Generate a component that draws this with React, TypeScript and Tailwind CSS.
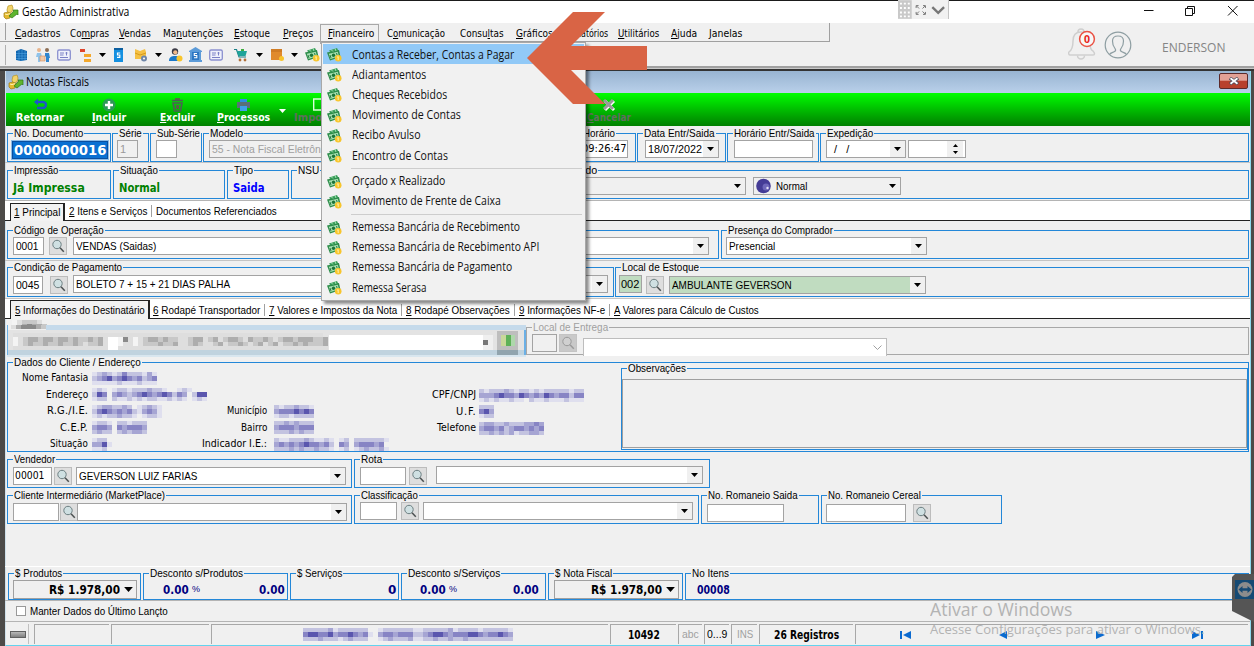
import { useLayoutEffect, useRef } from 'react';
import type { ReactNode } from 'react';
import clsx from 'clsx';

interface FitProps {
  w: number;
  className?: string;
  children: ReactNode;
}

// Condenses (or spreads) a label so that it takes exactly `w` pixels
function Fit({ w, className, children }: FitProps) {
  const ref = useRef<HTMLSpanElement>(null);
  useLayoutEffect(() => {
    const el = ref.current;
    if (!el) return;
    el.style.letterSpacing = '0px';
    const natural = el.offsetWidth;
    if (natural > w) {
      el.style.transform = `scaleX(${w / natural})`;
    } else {
      el.style.letterSpacing = `${(w - natural) / (el.textContent?.length || 1)}px`;
    }
  }, [w]);
  return (
    <span className={clsx('inline-block shrink-0', className)} style={{ width: w }}>
      <span ref={ref} className="inline-block origin-left whitespace-pre">
        {children}
      </span>
    </span>
  );
}

// "&" marks the accelerator key, as in the menu resources
function Accel({ text }: { text: string }) {
  const i = text.indexOf('&');
  if (i < 0) return <>{text}</>;
  return (
    <>
      {text.slice(0, i)}
      <u className="underline-offset-1">{text[i + 1]}</u>
      {text.slice(i + 2)}
    </>
  );
}

interface GroupProps {
  label: string;
  lw: number;
  className?: string;
  disabled?: boolean;
  children?: ReactNode;
}

function Group({ label, lw, className, disabled, children }: GroupProps) {
  return (
    <fieldset
      className={clsx(
        'min-w-0 shrink-0 border',
        disabled ? 'border-[#a8a8a8] text-[#a0a0a0]' : 'border-[#2387d8]',
        className,
      )}
    >
      <legend className="mb-[2px] ml-[5px] h-[10px] px-px text-[11px] leading-[10px]">
        <Fit w={lw}>{label}</Fit>
      </legend>
      <div className="flex items-start">{children}</div>
    </fieldset>
  );
}

function Caret({ className }: { className?: string }) {
  return (
    <svg className={clsx('shrink-0', className)} width="7" height="4" viewBox="0 0 7 4">
      <path d="M0 0h7L3.5 4z" fill="#000" />
    </svg>
  );
}

function Field({ className, children }: { className?: string; children?: ReactNode }) {
  return (
    <div
      className={clsx(
        'flex h-[18px] shrink-0 items-center overflow-hidden border border-[#a3a3a3] px-[2px] text-[11px] leading-[14px]',
        className,
      )}
    >
      {children}
    </div>
  );
}

function Combo({ className, children }: { className?: string; children?: ReactNode }) {
  return (
    <div
      className={clsx(
        'flex h-[18px] shrink-0 items-center justify-between border border-[#a3a3a3] pl-[2px] text-[11px] leading-[14px]',
        className,
      )}
    >
      <span className="flex items-center">{children}</span>
      <span className="flex h-4 w-[15px] items-center justify-center bg-[#f0f0f0]">
        <Caret />
      </span>
    </div>
  );
}

function LookupButton({ className, dim }: { className?: string; dim?: boolean }) {
  return (
    <div
      className={clsx(
        'flex h-[18px] w-[18px] shrink-0 items-center justify-center border',
        dim ? 'border-[#c4c4c4] bg-[#c9c9c9]' : 'border-[#bcbcbc] bg-[#dedede]',
        className,
      )}
    >
      <svg width="14" height="14" viewBox="0 0 14 14" fill="none">
        <circle cx="6" cy="5.5" r="4.2" fill={dim ? '#d0d0d0' : '#cfe0e2'} stroke={dim ? '#9a9a9a' : '#6d7f82'} />
        <path d="M9 8.8l3.8 4" stroke={dim ? '#9a9a9a' : '#4a4f50'} strokeWidth="1.5" />
      </svg>
    </div>
  );
}

const shades: Record<string, string> = {
  '0': 'bg-transparent',
  '1': 'bg-[#dfdfee]',
  '2': 'bg-[#c3c3e0]',
  '3': 'bg-[#a6a5d3]',
  '4': 'bg-[#8784c4]',
  '5': 'bg-[#5a56ae]',
  a: 'bg-[#f4f4f4]',
  b: 'bg-[#dedede]',
  c: 'bg-[#c8c8c8]',
  d: 'bg-[#adadad]',
  e: 'bg-[#8a8a8a]',
  w: 'bg-white',
};

// Pixelated censor bar, one character for each 5px block
function Mosaic({ rows, className }: { rows: string[]; className?: string }) {
  return (
    <div className={clsx('shrink-0', className)}>
      {rows.map((row, y) => (
        <div key={y} className={clsx('flex', y === 1 ? 'h-[5px]' : 'h-[4px]')}>
          {row.split('').map((c, x) => (
            <span key={x} className={clsx('h-full w-[5px]', shades[c])} />
          ))}
        </div>
      ))}
    </div>
  );
}

function AppIcon() {
  return (
    <svg className="shrink-0" width="16" height="16" viewBox="0 0 16 16">
      <path d="M5 2l4-1 1 3-1 4-4 1-1-3z" fill="#f2d46a" stroke="#b99524" strokeWidth=".7" />
      <path d="M1 9l4-1 3 2-1 4-4 1-2-2z" fill="#e4b92e" stroke="#a07c14" strokeWidth=".7" />
      <path d="M6 12l5-5-1-1 5 0v5l-1-1-5 4z" fill="#5fb52e" stroke="#2f7a12" strokeWidth=".7" />
      <path d="M2 10l2 .6 3-1" stroke="#fff3b0" fill="none" />
    </svg>
  );
}

function MoneyIcon() {
  return (
    <svg className="shrink-0" width="15" height="15" viewBox="0 0 15 15">
      <path d="M2 3.500l8-2.500 1.500 3L4 6z" fill="#3aa05a" />
      <path d="M0 5.500l12-2.500 1.500 7L3 13.500z" fill="#2c8c4a" />
      <path d="M1.800 6.800l9-2 1.200 4.400-8.500 2.800z" fill="#a5dfb0" />
      <path d="M4 2.500l2 2M8 1.500l1 2.500" stroke="#bfeccb" strokeWidth=".8" />
      <circle cx="6.500" cy="8.300" r="1.700" fill="#1c7438" />
      <path d="M3 8l1 3M9.500 6l.6 2" stroke="#1c7438" strokeWidth=".9" />
      <circle cx="11.200" cy="11.300" r="3.300" fill="#f8c52c" />
      <path d="M11.200 9.500v3.600M10.200 10h1" stroke="#fff2ac" strokeWidth="1" />
    </svg>
  );
}

function GlobeIcon() {
  return (
    <svg width="14" height="14" viewBox="0 0 14 14">
      <path d="M1 3l5-2 6 2v9l-6 1-5-1z" fill="#1267b0" />
      <path d="M1 5.5h11M1 8h11M1 10.5h11M4 2v11M7 2v11M10 3v9" stroke="#4fa3e3" strokeWidth=".6" />
    </svg>
  );
}

function PeopleIcon() {
  return (
    <svg width="16" height="16" viewBox="0 0 16 16" fill="none">
      <circle cx="4" cy="3" r="2" fill="#e8b48c" />
      <circle cx="12" cy="3" r="2" fill="#8d6e55" />
      <path d="M2 6h4l1 4H5v5H3v-5H1z" fill="#8fc3ea" />
      <path d="M10 6h4l1 5h-1v4h-3v-5l-1-1z" fill="#2f86cf" />
      <path d="M5 9h5v5H5z" fill="#f0c9a8" stroke="#d08a5c" strokeWidth=".6" />
    </svg>
  );
}

function CardIcon() {
  return (
    <svg width="14" height="12" viewBox="0 0 14 12" fill="none">
      <rect x=".7" y="1" width="12.6" height="10" rx="1.4" fill="#eef0fb" stroke="#8a90cf" strokeWidth="1.3" />
      <path d="M3 4h4M3 6h3.5M3 8.5h8M9.5 3v3.5M8.5 4h2" stroke="#7a80c6" />
    </svg>
  );
}

function TreeIcon() {
  return (
    <svg width="13" height="14" viewBox="0 0 13 14">
      <path d="M1 1h5v3H1z" fill="#e0452c" />
      <path d="M5 6h7v3H5z" fill="#f3a82c" />
      <path d="M5 11h7v3H5z" fill="#f3a82c" />
    </svg>
  );
}

function BookIcon() {
  return (
    <svg width="9" height="14" viewBox="0 0 9 14">
      <path d="M0 0h9v14H0z" fill="#1590e0" />
      <path d="M0 0h9v2H0z" fill="#0c5fa0" />
      <path d="M6.200 5H3.500v2h2.300v2.300H3" stroke="#fff" fill="none" strokeWidth="1.200" />
    </svg>
  );
}

function BoxGearIcon() {
  return (
    <svg width="14" height="14" viewBox="0 0 14 14">
      <path d="M1 1l5 2 5-2 1 3v7H1z" fill="#f5c144" />
      <path d="M1 5l5 2 6-2" stroke="#d59a1c" fill="none" />
      <circle cx="10" cy="10.500" r="3" fill="#6f86a8" />
      <circle cx="10" cy="10.500" r="1.100" fill="#f5f5f5" />
    </svg>
  );
}

function PersonIcon() {
  return (
    <svg width="14" height="14" viewBox="0 0 14 14">
      <circle cx="6" cy="3.500" r="3.200" fill="#3b3b46" />
      <circle cx="6.300" cy="4.300" r="2.100" fill="#f0b98a" />
      <path d="M0 13c0-4 2.500-5 6-5s5 1 5 5z" fill="#1a78c8" />
      <circle cx="10.500" cy="10.500" r="3" fill="#f8c52c" />
    </svg>
  );
}

function BankIcon() {
  return (
    <svg width="13" height="15" viewBox="0 0 13 15">
      <path d="M0 4l6.500-4L13 4v1H0zM0 13h13v2H0zM1 5h2v8H1zM10 5h2v8h-2z" fill="#5c9bd8" />
      <path d="M3 5h7v8H3z" fill="#2e78c4" />
      <path d="M8 6.500H5.300v2h2.500v2.200H5" stroke="#fff" fill="none" strokeWidth="1.100" />
    </svg>
  );
}

function CartIcon() {
  return (
    <svg width="14" height="14" viewBox="0 0 14 14">
      <path d="M0 1.500h2.500L5 9h7" stroke="#1a7f86" fill="none" strokeWidth="1.200" />
      <path d="M3 3h10l-1.500 5H4.500z" fill="#1fa39a" />
      <path d="M7 1h3v2H7z" fill="#3fae3f" />
      <circle cx="6" cy="12" r="1.400" fill="#b0703a" />
      <circle cx="11" cy="12" r="1.400" fill="#b0703a" />
    </svg>
  );
}

function PackageIcon() {
  return (
    <svg width="13" height="13" viewBox="0 0 13 13">
      <path d="M0 1h11v11H0z" fill="#e08a2c" />
      <path d="M0 1h11v3H0z" fill="#d07c24" />
      <circle cx="10.500" cy="10.500" r="2.500" fill="#f8c52c" />
    </svg>
  );
}

function TitleBar() {
  return (
    <div className="relative flex h-[23px] shrink-0 items-center border-t border-[#1b1b1b] bg-white pl-[3px]">
      <AppIcon />
      <Fit w={107} className="ml-[3px] text-[12px] font-['Open_Sans',sans-serif]">Gestão Administrativa</Fit>
      <div className="flex-1" />
      <svg className="mr-[16px] -mt-[3px]" width="94" height="12" viewBox="0 0 94 12" fill="none" stroke="#111">
        <path d="M0 5.500h9.500M41.500 3.500h7v7h-7zM43.500 3.500v-2h7v7h-2M84 1l9.500 9.500M93.500 1L84 10.500" />
      </svg>
      {/* Remote session handle */}
      <div className="absolute top-[-1px] left-[898px] flex h-[19px] w-[51px] items-center border-r border-[#c4c4c4] bg-[#f1f1f1]">
        <svg width="51" height="19" viewBox="0 0 51 19" fill="none">
          <path d="M0 0h14v19H0z" fill="#c9c9c9" />
          <path d="M2 3.500h12M2 8h12M2 12.500h12M2 16.500h12" stroke="#fff" strokeWidth="2" strokeDasharray="2 2" />
          <path d="M18.500 8V5.500H21M25.500 5.500H28V8M28 12v2.500h-2.500M21 14.500h-2.500V12M19 6l2.500 2.500M27.500 6L25 8.500M27.500 14L25 11.500M19 14l2.500-2.500" stroke="#777" />
          <path d="M35 7l6 6 6-6" stroke="#777" strokeWidth="2.400" />
        </svg>
      </div>
    </div>
  );
}

// text, width of the label, distance to the next label
const menus: [string, number, number][] = [
  ['&Cadastros', 45, 10],
  ['Co&mpras', 39, 10],
  ['&Vendas', 32, 12],
  ['Ma&nutenções', 60, 11],
  ['&Estoque', 36, 13],
  ['&Preços', 30, 15],
];

const menusRight: [string, number, number][] = [
  ['C&omunicação', 58, 15],
  ['Consu&ltas', 44, 12],
  ['&Gráficos', 37, 16],
  ['&Relatórios', 39, 10],
  ['&Utilitários', 41, 12],
  ['&Ajuda', 26, 12],
  ['&Janelas', 33, 0],
];

function Gap({ px }: { px: number }) {
  return <span className="shrink-0" style={{ width: px }} />;
}

function MenuBar() {
  return (
    <div className="flex h-[19px] w-[830px] shrink-0 border-r border-b border-[#a0a0a0] pl-[5px] text-[11px] font-['DejaVu_Sans_Condensed','DejaVu_Sans',sans-serif]">
      <div className="mr-[9px] h-[17px] border-r border-[#a0a0a0]" />
      <div className="flex h-[22px] items-center">
        {menus.map(([text, w, gap]) => (
          <span key={text} className="flex">
            <Fit w={w}><Accel text={text} /></Fit>
            <Gap px={gap} />
          </span>
        ))}
      </div>
      <div className="-ml-[8px] mt-[1px] mr-[8px] flex h-[20px] w-[59px] items-center border-t border-r border-l border-[#a8a8a8] pl-[7px]">
        <Fit w={46}><Accel text="&Financeiro" /></Fit>
      </div>
      <div className="flex h-[22px] items-center">
        {menusRight.map(([text, w, gap]) => (
          <span key={text} className="flex">
            <Fit w={w}><Accel text={text} /></Fit>
            <Gap px={gap} />
          </span>
        ))}
      </div>
    </div>
  );
}

function ToolBar() {
  return (
    <div className="flex h-[24px] shrink-0 items-center pt-px pl-[5px]">
      <div className="h-[20px] w-px bg-[#b0b0b0]" />
      <div className="ml-[5px] flex items-center">
        <span className="flex w-[21px] justify-center"><GlobeIcon /></span>
        <span className="flex w-[21px] justify-center"><PeopleIcon /></span>
        <span className="flex w-[21px] justify-center"><CardIcon /></span>
        <span className="flex w-[23px] justify-center"><TreeIcon /></span>
        <Caret className="mx-[2px]" />
        <span className="flex w-[21px] justify-center"><BookIcon /></span>
        <span className="flex w-[24px] justify-center"><BoxGearIcon /></span>
        <Caret className="mx-[2px]" />
        <span className="flex w-[23px] justify-center"><PersonIcon /></span>
        <span className="flex w-[17px] justify-center"><BankIcon /></span>
        <span className="flex w-[24px] justify-center"><CardIcon /></span>
        <span className="flex w-[26px] justify-center"><CartIcon /></span>
        <Caret className="mx-[2px]" />
        <span className="flex w-[24px] justify-center"><PackageIcon /></span>
        <Caret className="mx-[2px]" />
        <span className="flex w-[25px] justify-center"><MoneyIcon /></span>
      </div>
    </div>
  );
}

function UserPanel() {
  return (
    <div className="mt-[6px] mr-[29px] flex items-center">
      <svg width="70" height="40" viewBox="0 0 70 40" fill="none">
        <path d="M13 4c-6 0-8 4-8 9 0 6-1 9-4 11-1 1 0 3 1 3h23c2 0 2-2 0-4-2-1-3-4-3-8 0-7-3-11-9-11z" stroke="#cfcfcf" strokeWidth="1.500" />
        <path d="M10 4a3 3 0 016 0M9.500 27.500a3.500 3.500 0 007 0" stroke="#cfcfcf" strokeWidth="1.500" />
        <circle cx="19" cy="11" r="7.400" fill="#f7f7f7" stroke="#ea5345" strokeWidth="1.500" />
        <text x="19" y="15" textAnchor="middle" fontSize="10.500" fontWeight="700" fill="#e8261c" className="font-['Open_Sans',sans-serif]">0</text>
        <circle cx="50" cy="17" r="12.800" stroke="#8e9ea2" strokeWidth="1.200" />
        <path d="M41.500 26.500c1-2 4-2 5.500-3.200 1-.8.700-2-.3-3.300-1.600-2-2.200-4-2.200-7 0-3.500 2.500-5 5.500-5s5.500 1.500 5.500 5c0 3-.6 5-2.200 7-1 1.300-1.300 2.500-.3 3.300 1.500 1.200 4.500 1.200 5.500 3.200" stroke="#8e9ea2" strokeWidth="1.200" />
      </svg>
      <Fit w={63} className="ml-[24px] text-[12px] text-[#858585] font-['Open_Sans',sans-serif]">ENDERSON</Fit>
    </div>
  );
}

function ActionBar() {
  return (
    <div className="flex h-[33px] shrink-0 bg-linear-to-b from-[#00ff00] to-[#008000] pl-[10px] text-[11px] leading-[12px] font-bold text-white font-['DejaVu_Sans',sans-serif]">
      <div className="mr-[28px] flex flex-col items-center pt-[5px]">
        <svg width="13" height="14" viewBox="0 0 13 14" fill="none">
          <path d="M3 4h6a3 3 0 010 6H3" stroke="#1d55c8" strokeWidth="2.400" />
          <path d="M0 4l4-3.500v7z" fill="#1d55c8" />
        </svg>
        <Fit w={48}>Retornar</Fit>
      </div>
      <div className="mr-[34px] flex flex-col items-center pt-[5px]">
        <svg width="14" height="14" viewBox="0 0 14 14">
          <circle cx="7" cy="7" r="6.500" fill="#2c9a55" />
          <path d="M7 3v8M3 7h8" stroke="#fff" strokeWidth="2.400" />
        </svg>
        <Fit w={34}><Accel text="&Incluir" /></Fit>
      </div>
      <div className="mr-[22px] flex flex-col items-center pt-[5px]">
        <svg width="13" height="14" viewBox="0 0 13 14" fill="none">
          <path d="M1 2.500h11M2 5l1.500 8h6L11 5z" stroke="#4b6152" strokeWidth="1.600" />
          <path d="M4 1h5M5 7l3 4M8 7l-3 4" stroke="#6b4a55" strokeWidth="1.300" />
        </svg>
        <Fit w={35}><Accel text="&Excluir" /></Fit>
      </div>
      <div className="mr-[9px] flex flex-col items-center pt-[5px]">
        <svg width="13" height="14" viewBox="0 0 13 14">
          <path d="M3 1h7v4H3z" fill="#2f8fe0" />
          <path d="M0 4h13v6H0z" fill="#5a7078" />
          <path d="M3 8h7v5H3z" fill="#3fa0ea" />
        </svg>
        <Fit w={53}><Accel text="&Processos" /></Fit>
      </div>
      <svg className="mt-[16px] mr-[8px]" width="7" height="4" viewBox="0 0 7 4">
        <path d="M0 0h7L3.500 4z" fill="#fff" />
      </svg>
      <div className="mr-[243px] flex w-[50px] flex-col items-center pt-[5px] text-[#5f6f5f]">
        <svg width="13" height="14" viewBox="0 0 13 14" fill="none">
          <path d="M.7 1v11h11V4l-3-3z" stroke="#d8ffd8" strokeWidth="1.400" />
        </svg>
        <Fit w={50}>Importar</Fit>
      </div>
      <div className="flex flex-col items-center pt-[5px] text-[#5f6f5f]">
        <svg width="14" height="14" viewBox="0 0 14 14">
          <path d="M3 3l9 9M12 3l-9 9" stroke="#fff" strokeWidth="3" />
          <path d="M2 2l9 9M11 2l-9 9" stroke="#9a9a9a" strokeWidth="3" />
        </svg>
        <Fit w={44}><Accel text="&Cancelar" /></Fit>
      </div>
    </div>
  );
}

function HeaderRows() {
  return (
    <>
      <div className="flex h-[37px] shrink-0 gap-px border-b border-[#c4c4c4] pt-[2px] pl-[2px]">
        <Group label="No. Documento" lw={69} className="h-[34px] w-[104px]">
          <div className="ml-[3px] flex h-[20px] w-[98px] items-center border border-[#8dbbe6] bg-white p-px">
            <div className="flex h-full w-full items-center bg-[#0a70d2] pl-px text-white outline outline-[#0a4fa0]">
              <Fit w={92} className="text-[14px] leading-[16px] font-bold font-['DejaVu_Sans',sans-serif]">0000000016</Fit>
            </div>
          </div>
        </Group>
        <Group label="Série" lw={23} className="h-[34px] w-[37px]">
          <Field className="ml-[4px] w-[21px] text-[#9a9a9a]">1</Field>
        </Group>
        <Group label="Sub-Série" lw={43} className="h-[34px] w-[52px]">
          <Field className="ml-[5px] w-[21px] bg-white" />
        </Group>
        <Group label="Modelo" lw={33} className="h-[34px] w-[372px]">
          <Field className="ml-[5px] w-[150px] text-[#a0a0a0]">
            <Fit w={122}>55 - Nota Fiscal Eletrônica</Fit>
          </Field>
        </Group>
        <Group label="Horário" lw={32} className="h-[34px] w-[60px]">
          <Field className="ml-[2px] w-[49px] bg-white px-0 text-[11px] font-['DejaVu_Sans_Condensed','DejaVu_Sans',sans-serif]">
            <Fit w={44}>09:26:47</Fit>
          </Field>
        </Group>
        <Group label="Data Entr/Saida" lw={71} className="h-[34px] w-[89px]">
          <Combo className="ml-[7px] w-[74px] bg-white">
            <Fit w={54}>18/07/2022</Fit>
          </Combo>
        </Group>
        <Group label="Horário Entr/Saida" lw={81} className="h-[34px] w-[92px]">
          <Field className="ml-[6px] w-[79px] bg-white" />
        </Group>
        <Group label="Expedição" lw={46} className="h-[34px] w-[429px]">
          <Combo className="ml-[5px] w-[80px] bg-white">
            <Fit w={16} className="ml-[5px]">/  /</Fit>
          </Combo>
          <Field className="ml-[2px] w-[58px] justify-end bg-white px-0">
            <span className="flex h-4 w-[16px] flex-col items-center justify-center gap-[4px] bg-[#f0f0f0]">
              <svg width="5" height="3" viewBox="0 0 5 3"><path d="M0 3h5L2.500 0z" /></svg>
              <svg width="5" height="3" viewBox="0 0 5 3"><path d="M0 0h5L2.500 3z" /></svg>
            </span>
          </Field>
        </Group>
      </div>

      <div className="flex h-[37px] shrink-0 gap-px pt-[2px] pl-[2px]">
        <Group label="Impressão" lw={44} className="h-[34px] w-[104px]">
          <Fit w={72} className="mt-[3px] ml-[5px] text-[12px] leading-[16px] font-bold text-[#008000] font-['DejaVu_Sans',sans-serif]">Já Impressa</Fit>
        </Group>
        <Group label="Situação" lw={38} className="ml-px h-[34px] w-[112px]">
          <Fit w={41} className="mt-[3px] ml-[5px] text-[12px] leading-[16px] font-bold text-[#008000] font-['DejaVu_Sans',sans-serif]">Normal</Fit>
        </Group>
        <Group label="Tipo" lw={19} className="ml-px h-[34px] w-[62px]">
          <Fit w={32} className="mt-[3px] ml-[5px] text-[12px] leading-[16px] font-bold text-[#0000ff] font-['DejaVu_Sans',sans-serif]">Saida</Fit>
        </Group>
        <Group label="NSU" lw={21} className="ml-px h-[34px] w-[247px]" />
        <Group label="Conciliado" lw={50} className="ml-px h-[34px] w-[709px]">
          <Combo className="ml-[5px] w-[200px]" />
          <Combo className="ml-[7px] w-[148px]">
            <svg width="16" height="16" viewBox="0 0 16 16">
              <circle cx="7.500" cy="8" r="7.300" fill="#453c96" />
              <circle cx="10" cy="9" r="3.500" fill="#6f68ba" />
              <circle cx="11.500" cy="10" r="1.200" fill="#e2e0f5" />
            </svg>
            <Fit w={31} className="ml-[4px]">Normal</Fit>
          </Combo>
        </Group>
      </div>
    </>
  );
}

function MainTabs() {
  return (
    <div className="flex h-[21px] shrink-0 items-stretch border-t border-b border-t-[#b4b4b4] border-b-[#222] bg-white text-[11px]">
      <div className="-mb-px ml-[5px] mt-[2px] flex w-[55px] items-center border-t border-r-2 border-l border-[#222] bg-[#f2f2f2] pl-[3px]">
        <Fit w={46}><Accel text="&1 Principal" /></Fit>
      </div>
      <div className="flex items-center pt-px pl-[4px]">
        <Fit w={78}><Accel text="&2 Itens e Serviços" /></Fit>
        <span className="mx-[4px] h-[12px] w-px bg-[#a0a0a0]" />
        <Fit w={121}>Documentos Referenciados</Fit>
      </div>
    </div>
  );
}

function OperationRows() {
  return (
    <>
      <div className="flex h-[40px] shrink-0 gap-px border-b border-[#c4c4c4] pt-[4px] pl-[2px]">
        <Group label="Código de Operação" lw={90} className="h-[34px] w-[712px]">
          <Field className="ml-[5px] w-[31px] bg-white"><Fit w={22}>0001</Fit></Field>
          <LookupButton className="ml-[5px]" />
          <Combo className="ml-[6px] w-[636px] bg-white"><Fit w={80}>VENDAS (Saidas)</Fit></Combo>
        </Group>
        <Group label="Presença do Comprador" lw={105} className="ml-px h-[34px] w-[528px]">
          <Combo className="ml-[4px] w-[201px] bg-white"><Fit w={46}>Presencial</Fit></Combo>
        </Group>
      </div>
      <div className="flex h-[38px] shrink-0 gap-px border-b border-[#c4c4c4] pt-px pl-[2px]">
        <Group label="Condição de Pagamento" lw={108} className="h-[35px] w-[607px]">
          <Field className="mt-[2px] ml-[5px] w-[30px] bg-white"><Fit w={23}>0045</Fit></Field>
          <LookupButton className="mt-[2px] ml-[7px]" />
          <Combo className="mt-px ml-[5px] w-[535px] bg-white"><Fit w={154}>BOLETO 7 + 15 + 21 DIAS PALHA</Fit></Combo>
        </Group>
        <Group label="Local de Estoque" lw={77} className="h-[35px] w-[634px]">
          <Field className="mt-px ml-[3px] w-[23px] bg-[#c0dcc0] px-px"><Fit w={18}>002</Fit></Field>
          <LookupButton className="mt-[2px] ml-[4px]" />
          <Combo className="mt-[2px] ml-[5px] w-[257px] bg-[#c0dcc0]"><Fit w={120}>AMBULANTE GEVERSON</Fit></Combo>
        </Group>
      </div>
    </>
  );
}

const detailTabs: [string, number][] = [
  ['&6 Rodapé Transportador', 107],
  ['&7 Valores e Impostos da Nota', 128],
  ['&8 Rodapé Observações', 104],
  ['&9 Informações NF-e', 86],
  ['&A Valores para Cálculo de Custos', 145],
];

function DetailTabs() {
  return (
    <div className="flex h-[20px] shrink-0 items-stretch border-b border-[#222] bg-white text-[11px]">
      <div className="-mb-px ml-[5px] mt-px flex w-[140px] items-center border-t border-r-2 border-l border-[#222] bg-[#f2f2f2] pl-[4px]">
        <Fit w={130}><Accel text="&5 Informações do Destinatário" /></Fit>
      </div>
      <div className="flex items-center pt-[3px] pl-[3px]">
        {detailTabs.map(([text, w], i) => (
          <span key={text} className="flex items-center">
            {i > 0 && <span className="mx-[4px] h-[12px] w-px bg-[#a0a0a0]" />}
            <Fit w={w}><Accel text={text} /></Fit>
          </span>
        ))}
      </div>
    </div>
  );
}

function ClientRow() {
  return (
    <div className="flex h-[38px] shrink-0 pl-[2px]">
      <div className="mt-px flex h-[37px] w-[519px] shrink-0 flex-col">
        <Mosaic rows={['0abcccb', '0abdeddc']} className="h-[5px] overflow-hidden" />
        <div className="flex h-[5px]">
          <span className="w-[4px] border-l border-[#6bb0e6]" />
          <Mosaic rows={['bdeeedc']} />
          <span className="h-[5px] flex-1 bg-[#c5daeb]" />
        </div>
        <div className="flex h-[20px] border-r-2 border-l border-[#6bb0e6] bg-[#e3e3e3] pl-[5px]">
          <Mosaic
            rows={['bbbbbbbbbbbbbbbbbbbbbbbbbbbbbbbbbbbbbbbbbbbbbbbbbbbbbbbbbbbbbb', 'abcddcddcddcdccdcdbwwaebabcddcdccbbcddbcdbcddcbdccdcbcddcdddccd', 'abcdccdccdccdcbccdbwwabbabcccdccdbbcdcbbcdbccdcbcdbcdbccdcdcccd', 'bbbbbbbbbbbbbbbbbbbwwbbbbbbbbbbbbbbbbbbbbbbbbbbbbbbbbbbbbbbbbbb']}
            className="mt-[3px] w-[316px]"
          />
          <div className="mt-[5px] h-[15px] w-[134px] bg-white" />
          <div className="mt-[5px] h-[15px] w-[20px] bg-white" />
          <div className="mt-[5px] flex h-[15px] w-[10px] items-center bg-[#efefef]"><span className="h-[5px] w-[5px] bg-[#777]" /></div>
          <div className="mt-px ml-[4px] flex h-[19px] w-[21px] bg-[#bebebe] pt-[4px] pl-[4px]">
            <span className="h-[11px] w-[5px] bg-[#c9d89a]" />
            <span className="h-[11px] w-[5px] bg-[#5eb158]" />
            <span className="h-[11px] w-[4px] bg-[#aed7ab]" />
          </div>
        </div>
        <div className="flex h-[5px] border-r-2 border-l border-[#6bb0e6] bg-[#c0d3df]"><span className="ml-[489px] h-full w-[21px] bg-[#91a4ae]" /></div>
        <div className="h-[2px] bg-[#d8e6ef]" />
      </div>
      <Group label="Local de Entrega" lw={75} disabled className="mt-[3px] h-[33px] w-[723px]">
        <Field className="ml-[5px] w-[25px]" />
        <LookupButton dim className="ml-[2px]" />
        <div className="mt-[4px] ml-[6px] flex h-[18px] w-[304px] items-center justify-end border-t border-r border-l border-[#bdbdbd] bg-white pr-[4px]">
          <svg width="9" height="5" viewBox="0 0 9 5" fill="none"><path d="M.5.5l4 4 4-4" stroke="#a0a0a0" /></svg>
        </div>
      </Group>
    </div>
  );
}

function InfoLine({ label, lw, box, rows }: { label: string; lw: number; box: string; rows: string[] }) {
  return (
    <div className="flex h-[16.5px] items-center">
      <div className={clsx('flex shrink-0 justify-end', box)}><Fit w={lw}>{label}</Fit></div>
      <Mosaic rows={rows} />
    </div>
  );
}

function ClientData() {
  return (
    <div className="shrink-0 pl-[2px]">
      <Group label="Dados do Cliente / Endereço" lw={127} className="h-[95px] w-[1242px]">
        <div className="mt-px flex h-[81px] w-[613px] shrink-0 text-[11px] font-['DejaVu_Sans_Condensed','DejaVu_Sans',sans-serif]">
          <div className="w-[190px] shrink-0">
            <InfoLine label="Nome Fantasia" lw={66} box="w-[80px] mr-[4px]" rows={['1232124222131', '2345345434234', '1111121112111']} />
            <InfoLine label="Endereço" lw={42} box="w-[80px] mr-[4px]" rows={['121012212223221001210000', '254034323454345424302550', '122021121212211212101210']} />
            <InfoLine label="R.G./I.E." lw={41} box="w-[80px] mr-[4px]" rows={['12332232012321', '24543434213431', '12122322101221']} />
            <InfoLine label="C.E.P." lw={28} box="w-[80px] mr-[4px]" rows={['12210221222', '34430434443', '23220232332']} />
            <InfoLine label="Situação" lw={38} box="w-[80px] mr-[4px]" rows={['1220', '3351', '1120']} />
          </div>
          <div className="mt-[33px] w-[190px] shrink-0">
            <InfoLine label="Município" lw={40} box="w-[69px] mr-[7px]" rows={['21223221', '34445454', '12212222']} />
            <InfoLine label="Bairro" lw={26} box="w-[69px] mr-[7px]" rows={['22323222', '34443444', '22232322']} />
            <InfoLine label="Indicador I.E.:" lw={65} box="w-[69px] mr-[7px]" rows={['21122232112101202222221', '34343454434204303444340', '22232322322101201232231']} />
          </div>
          <div className="mt-[17px] shrink-0">
            <InfoLine label="CPF/CNPJ" lw={44} box="w-[88px] mr-[3px]" rows={['2122232122121222221220', '3334544354343543442440', '1212112110211211121110']} />
            <InfoLine label="U.F." lw={20} box="w-[88px] mr-[3px]" rows={['222', '453', '122']} />
            <InfoLine label="Telefone" lw={39} box="w-[88px] mr-[3px]" rows={['2332232223343', '3443423443434', '2232323122332']} />
          </div>
        </div>
        <Group label="Observações" lw={58} className="-mt-[6px] h-[87px] w-[627px]">
          <div className="mt-[4px] h-[69px] w-[625px] border border-[#a0a0a0]" />
        </Group>
      </Group>
    </div>
  );
}

function SellerRows() {
  return (
    <>
      <div className="mt-[2px] flex shrink-0 gap-[3px] pl-[2px]">
        <Group label="Vendedor" lw={41} className="h-[34px] w-[345px]">
          <Field className="mt-px ml-[5px] w-[39px] bg-white px-px font-['DejaVu_Sans_Condensed','DejaVu_Sans',sans-serif]"><Fit w={29}>00001</Fit></Field>
          <LookupButton className="mt-px ml-[2px]" />
          <Combo className="mt-px ml-[4px] w-[270px] bg-white"><Fit w={118}>GEVERSON LUIZ FARIAS</Fit></Combo>
        </Group>
        <Group label="Rota" lw={21} className="-ml-px h-[34px] w-[356px]">
          <Field className="mt-px ml-[5px] w-[46px] bg-white" />
          <LookupButton className="mt-px ml-[3px]" />
          <Combo className="ml-[9px] w-[267px] bg-white" />
        </Group>
      </div>
      <div className="mt-[2px] flex shrink-0 gap-[2px] pl-[2px]">
        <Group label="Cliente Intermediário (MarketPlace)" lw={151} className="h-[34px] w-[345px]">
          <Field className="mt-px ml-[5px] w-[46px] bg-white" />
          <LookupButton className="mt-px ml-px" />
          <Combo className="mt-px -ml-px w-[270px] bg-white" />
        </Group>
        <Group label="Classificação" lw={57} className="h-[34px] w-[345px]">
          <Field className="ml-[5px] w-[37px] bg-white" />
          <LookupButton className="ml-[4px]" />
          <Combo className="ml-[4px] w-[270px] bg-white" />
        </Group>
        <Group label="No. Romaneio Saida" lw={90} className="h-[34px] w-[118px]">
          <Field className="mt-[2px] ml-[5px] w-[77px] bg-white" />
        </Group>
        <Group label="No. Romaneio Cereal" lw={93} className="h-[34px] w-[181px]">
          <Field className="mt-[2px] ml-[4px] w-[80px] bg-white" />
          <LookupButton className="mt-[2px] ml-[7px]" />
        </Group>
      </div>
    </>
  );
}

function Amount({ w, className, children }: FitProps) {
  return (
    <Fit w={w} className={clsx("text-[12px] leading-[14px] font-bold font-['DejaVu_Sans',sans-serif]", className)}>
      {children}
    </Fit>
  );
}

function Totals() {
  return (
    <div className="flex h-[35px] shrink-0 gap-[2px] border-t border-b border-t-white border-b-[#b4b4b4] pt-px pl-[3px]">
      <Group label="$ Produtos" lw={47} className="h-[32px] w-[133px]">
        <div className="ml-[4px] flex h-[19px] w-[124px] items-center justify-end border border-[#a0a0a0] pr-[3px]">
          <Amount w={71}>R$ 1.978,00</Amount>
          <Caret className="ml-[4px] h-[5px] w-[9px]" />
        </div>
      </Group>
      <Group label="Desconto s/Produtos" lw={93} className="h-[32px] w-[145px]">
        <div className="flex h-[19px] w-full items-center pr-[2px] pl-[19px] text-[#000080]">
          <Amount w={26}>0.00</Amount>
          <span className="mb-px ml-[3px] text-[9px] leading-[12px]">%</span>
          <span className="flex-1" />
          <Amount w={26}>0.00</Amount>
        </div>
      </Group>
      <Group label="$ Serviços" lw={45} className="h-[32px] w-[109px]">
        <div className="flex h-[19px] w-full items-center justify-end pr-[2px] text-[#000080]">
          <Amount w={8}>0</Amount>
        </div>
      </Group>
      <Group label="Desconto s/Serviços" lw={92} className="h-[32px] w-[145px]">
        <div className="flex h-[19px] w-full items-center pr-[6px] pl-[18px] text-[#000080]">
          <Amount w={26}>0.00</Amount>
          <span className="mb-px ml-[3px] text-[9px] leading-[12px]">%</span>
          <span className="flex-1" />
          <Amount w={26}>0.00</Amount>
        </div>
      </Group>
      <Group label="$ Nota Fiscal" lw={57} className="h-[32px] w-[135px]">
        <div className="ml-[5px] flex h-[19px] w-[125px] items-center justify-end border border-[#a0a0a0] pr-[3px]">
          <Amount w={71}>R$ 1.978,00</Amount>
          <Caret className="ml-[4px] h-[5px] w-[9px]" />
        </div>
      </Group>
      <Group label="No Itens" lw={37} className="h-[32px] w-[564px]">
        <div className="flex h-[19px] items-center pl-[11px] text-[#000080]">
          <Amount w={33}>00008</Amount>
        </div>
      </Group>
    </div>
  );
}

function Panel({ className, children }: { className?: string; children?: ReactNode }) {
  return (
    <div className={clsx('mr-[2px] flex h-[20px] shrink-0 items-center justify-center border-t border-l border-[#a8a8a8]', className)}>
      {children}
    </div>
  );
}

function StatusBar() {
  return (
    <div className="flex h-[23px] shrink-0 items-start pt-[2px] pl-px text-[11px]">
      <div className="mr-[5px] flex h-[20px] w-[25px] items-center border-r border-[#c0c0c0] pl-[4px]">
        <div className="h-[7px] w-[16px] border border-[#606060] bg-linear-to-b from-[#b8b8b8] to-[#808080]" />
      </div>
      <Panel className="w-[75px]" />
      <Panel className="w-[98px]" />
      <Panel className="w-[397px] pr-[4px]">
        <Mosaic rows={['222223122222200122222211222223122221222221', '455445344543410344344422345543444554344543', '222322212322200123222311223223223222222222']} />
      </Panel>
      <Panel className="w-[66px]"><Amount w={32}>10492</Amount></Panel>
      <Panel className="w-[24px] text-[#a0a0a0]"><Fit w={17}>abc</Fit></Panel>
      <Panel className="w-[25px]"><Fit w={20}>0...9</Fit></Panel>
      <Panel className="w-[26px] text-[#a0a0a0]"><Fit w={16}>INS</Fit></Panel>
      <Panel className="w-[94px]"><Amount w={65}>26 Registros</Amount></Panel>
      <Panel className="mr-0 w-[393px] justify-start">
        <svg className="ml-[44px]" width="306" height="10" viewBox="0 0 306 10" fill="#0b6ad0">
          <path d="M0 1h2v8H0zM11 1v8L3 5zM107 1v8l-8-4zM196 1v8l9-4zM292 1v8l8-4zM301 1h2v8h-2z" />
        </svg>
      </Panel>
    </div>
  );
}

function InvoiceWindow() {
  return (
    <div className="flex h-[575px] w-[1246px] shrink-0 flex-col border-r border-b border-l border-r-[#8fd8ee] border-b-[#63d3ee] border-l-[#cfe0ea] bg-[#f0f0f0]">
      <div className="flex h-[22px] shrink-0 items-center bg-linear-to-b from-[#98b4d1] to-[#b9d0ea] pl-[2px]">
        <AppIcon />
        <Fit w={63} className="ml-[2px] text-[12px] font-['Open_Sans',sans-serif]">Notas Fiscais</Fit>
        <div className="flex-1" />
        <div className="mr-[2px] mb-[2px] flex h-[16px] w-[29px] items-center justify-center rounded-[2px] border border-[#5c2a2a] bg-linear-to-b from-[#e2a196] from-45% to-[#b8402c] to-50%">
          <svg width="10" height="8" viewBox="0 0 10 8">
            <path d="M1 1l8 6M9 1L1 7" stroke="#4a4a5a" strokeWidth="3.400" />
            <path d="M1.500 1.200l7 5.600M8.500 1.200l-7 5.600" stroke="#fff" strokeWidth="1.800" />
          </svg>
        </div>
      </div>
      <ActionBar />
      <div className="-ml-px flex flex-1 flex-col">
        <HeaderRows />
        <MainTabs />
        <OperationRows />
        <DetailTabs />
        <ClientRow />
        <ClientData />
        <SellerRows />
        <div className="flex-1" />
        <Totals />
        <div className="flex h-[21px] shrink-0 items-center border-b border-[#b4b4b4] pl-[11px] text-[11px]">
          <span className="mr-[4px] h-[10px] w-[10px] border border-[#999] bg-white" />
          <Fit w={138}>Manter Dados do Último Lançto</Fit>
        </div>
        <StatusBar />
      </div>
    </div>
  );
}

const financeMenu: [string, number][][] = [
  [
    ['Contas a Receber, Contas a Pagar', 162],
    ['Adiantamentos', 74],
    ['Cheques Recebidos', 95],
    ['Movimento de Contas', 109],
    ['Recibo Avulso', 69],
    ['Encontro de Contas', 96],
  ],
  [
    ['Orçado x Realizado', 93],
    ['Movimento de Frente de Caixa', 149],
  ],
  [
    ['Remessa Bancária de Recebimento', 168],
    ['Remessa Bancária de Recebimento API', 187],
    ['Remessa Bancária de Pagamento', 160],
    ['Remessa Serasa', 75],
  ],
];

function FinanceMenu() {
  return (
    <div className="absolute top-[42px] left-[321px] h-[259px] w-[265px] border border-[#a8a8a8] bg-[#f1f1f1] pt-px shadow-[3px_3px_3px_rgba(0,0,0,0.45)]">
      {financeMenu.map((items, g) => (
        <div key={g} className={clsx(g > 0 && 'pt-[5.5px]')}>
          {g > 0 && <div className="-mt-[3px] mr-[3px] mb-[2px] ml-[29px] h-px bg-[#cdcdcd]" />}
          {items.map(([text, w], i) => (
            <div
              key={text}
              className={clsx(
                'mx-px flex h-[20.2px] items-center pt-px pl-[4px] text-[12px] text-[#111] font-["Open_Sans",sans-serif]',
                g === 0 && i === 0 && 'bg-[#91c9f7]',
              )}
            >
              <MoneyIcon />
              <Fit w={w} className="ml-[10px]">{text}</Fit>
            </div>
          ))}
        </div>
      ))}
    </div>
  );
}

export default function App() {
  return (
    <div className="relative flex h-[646px] w-[1254px] flex-col overflow-hidden bg-[#f0f0f0] text-black font-['Liberation_Sans',Arial,sans-serif]">
      <TitleBar />
      <div className="flex h-[43px] shrink-0 justify-between">
        <div>
          <MenuBar />
          <ToolBar />
        </div>
        <UserPanel />
      </div>
      <div className="h-[5px] shrink-0 border-t-2 border-b-2 border-t-[#a0a0a0] border-b-[#333] bg-[#c8c8c8]" />
      <div className="flex bg-[#4c4a48] pl-[5px]">
        <InvoiceWindow />
      </div>

      <FinanceMenu />

      {/* Callout arrow over the highlighted entry */}
      <svg className="absolute top-[12px] left-[527px]" width="120" height="93" viewBox="0 0 120 93">
        <path d="M0 46L46 0h32L44 34h76v24H44l34 34H46z" fill="#d96445" />
      </svg>

      {/* Windows activation notice */}
      <div className="absolute top-[598px] left-[930px] text-[#b3b3b3] font-['Open_Sans',sans-serif]">
        <div className="h-[22px] text-[18px] leading-[22px]"><Fit w={142}>Ativar o Windows</Fit></div>
        <div className="text-[13px] leading-[18px]"><Fit w={275}>Acesse Configurações para ativar o Windows.</Fit></div>
      </div>

      <svg className="absolute top-[574px] left-[1232px]" width="22" height="48" viewBox="0 0 22 48">
        <path d="M3 0h19v48L0 37V3z" fill="#555" />
        <path d="M3 6h19v19H3z" fill="#154a74" />
        <circle cx="13" cy="15.500" r="7.500" fill="#8c8c8c" />
        <path d="M6.500 15.500l4-3.500v2.300h5V12l4 3.500-4 3.500v-2.300h-5V19z" fill="#164a74" />
      </svg>
    </div>
  );
}
